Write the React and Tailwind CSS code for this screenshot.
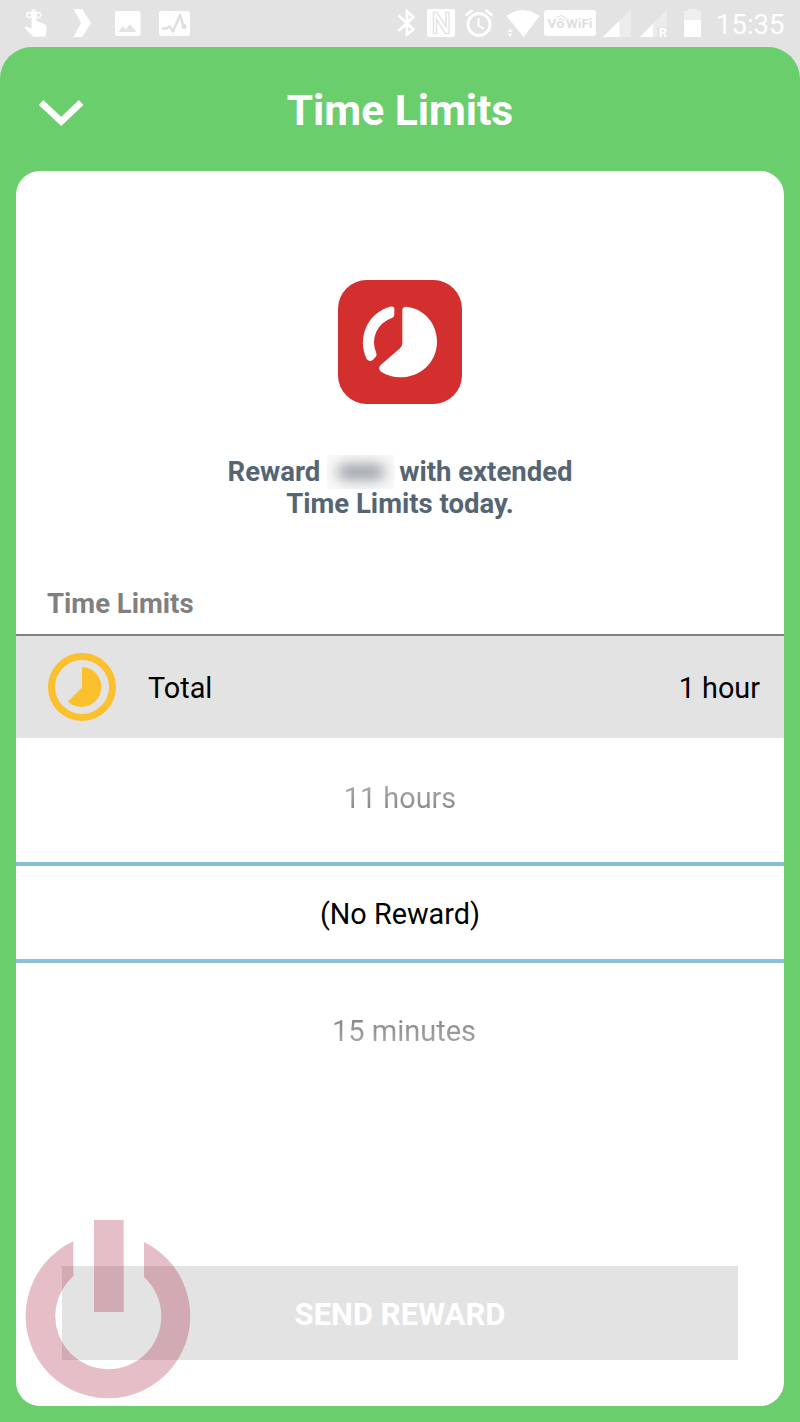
function StatusBar() {
  return (
    <div className="flex h-[47px] shrink-0 items-start pt-2 text-white">
      <svg className="ml-6 h-[30px] w-6 shrink-0" viewBox="24 8 24 30" fill="currentColor">
        <path d="M31.500 14q0-3 2.500-3t2.500 3v7l8 3.200q2.400.9 2.200 3.200l-1 9.300H33.500l-9-8.500 1.500-2 5.500 2.300z" />
        <g fill="none" stroke="currentColor" strokeWidth="1.300">
          <circle cx="29.200" cy="15" r="2.500" />
          <circle cx="38.400" cy="15" r="2.500" />
          <circle cx="33.800" cy="11.500" r="1.800" />
        </g>
      </svg>
      <svg className="ml-[25px] h-[30px] w-[18px] shrink-0" viewBox="73 8 18 30" fill="currentColor">
        <path d="M73.500 9H82L91 23 82 37H73.500L81 23z" />
      </svg>
      <svg className="ml-6 h-[30px] w-[26px] shrink-0" viewBox="115 8 26 30">
        <rect x="115" y="11" width="25.500" height="25" rx="2.500" fill="#fff" />
        <path d="M118.500 32l4.500-6 2.700 3.500 4.300-5.500 6.500 8z" fill="#e3e3e3" />
      </svg>
      <svg className="ml-[18px] h-[30px] w-[31px] shrink-0" viewBox="159 8 31 30">
        <rect x="159" y="11" width="31" height="25" rx="2.500" fill="#fff" />
        <path d="M162 28.500h4.500l3-2 3.500 5 7-16.500 3.500 11.500" fill="none" stroke="#e0e0e0" strokeWidth="2.600" strokeLinejoin="round" />
        <circle cx="184" cy="26.500" r="2.500" fill="#e0e0e0" />
      </svg>

      <svg className="ml-[207px] h-[30px] w-5 shrink-0" viewBox="397 8 20 30" fill="none" stroke="currentColor" strokeWidth="2.700">
        <path d="M398.500 15.500L413.500 29.500 407 34.500V11.500l6.500 5.500-15 14" />
      </svg>
      <svg className="ml-[10px] h-[30px] w-7 shrink-0" viewBox="427 8 28 30">
        <rect x="427" y="9" width="28" height="28" rx="2" fill="#fff" />
        <path d="M433.500 33.500V12.500h3.500l9 14V12.500h3v21h-3.500l-9-14v14z" fill="none" stroke="#e3e3e3" strokeWidth="1.400" />
      </svg>
      <svg className="ml-[9px] h-[30px] w-[30px] shrink-0" viewBox="464 8 30 30" fill="none" stroke="currentColor">
        <circle cx="479" cy="24.500" r="11" strokeWidth="3" />
        <path d="M465.500 15.500l7-5.500M492.500 15.500l-7-5.500" strokeWidth="2.800" />
        <path d="M478.500 18v7.500l5.500 3.500" strokeWidth="2" />
      </svg>
      <svg className="ml-3 h-[30px] w-[34px] shrink-0" viewBox="506 8 34 30" fill="currentColor">
        <path d="M506.500 16q16.500-12 33 0L523.500 37z" />
        <path d="M507.500 32l2.500-3.500 2.500 3.500zM507.500 33.500h5L510 37z" />
      </svg>
      <div className="mt-[2px] ml-1 flex h-[25.500px] w-[52px] shrink-0 items-center justify-center rounded-[3px] bg-white pt-[2px] font-['Roboto',sans-serif] text-[13.500px] leading-none font-bold text-[#dedede]">
        <span>V</span>
        <span className="relative">
          o
          <svg className="absolute -top-[3px] left-0 h-[8px] w-[11px]" viewBox="0 0 11 8" fill="none" stroke="#dedede" strokeWidth="1.200">
            <path d="M1 4q4-5 9 1M3 6q2-3 5 1" />
          </svg>
        </span>
        <span className="ml-[2px]">WiFi</span>
      </div>
      <svg className="ml-[7px] h-[30px] w-7 shrink-0" viewBox="603 8 28 30">
        <path d="M603 37L631 9v28z" fill="#ececec" />
        <path d="M603 37l16.500-16.500V37z" fill="#fff" />
      </svg>
      <div className="relative ml-[9px] h-[30px] w-7 shrink-0">
        <svg className="h-[30px] w-7" viewBox="640 8 28 30">
          <path d="M640 37L667 10v17h-10v10z" fill="#ececec" />
          <path d="M640 37l13-13v13z" fill="#fff" />
        </svg>
        <span className="absolute top-[17px] left-[19px] text-[12.500px] leading-[15px] font-bold">R</span>
      </div>
      <svg className="ml-[15px] h-[30px] w-[18px] shrink-0" viewBox="683 8 18 30">
        <path d="M684 11h4V9h9v2h4v9h-17z" fill="#efefef" />
        <path d="M684 20h17v17h-17z" fill="#fff" />
      </svg>
      <span className="ml-[15px] font-['Roboto',sans-serif] text-[27.500px] leading-[34px]">15:35</span>
    </div>
  );
}

function AppIcon() {
  return (
    <svg className="mt-[109px] size-[124px] shrink-0" viewBox="54 60 372 372">
      <rect x="54" y="60" width="372" height="372" rx="86" fill="#d32f2f" />
      <g fill="#fff">
        <path d="M247 151Q247 140 258 140C312 145 351 190 351 245C351 306 302 352 240 352Q208 351 183 335Q172 325 182 315L240 265Q247 259 247 250Z" />
        <path d="M210 140A112 112 0 0 0 140 297Q149 307 158 300L166 292Q172 286 168 277A76 76 0 0 1 214 175Q223 171 223 164L223 148Q223 137 210 140Z" />
      </g>
    </svg>
  );
}

function TotalIcon() {
  return (
    <svg className="size-[68px] shrink-0" viewBox="0 0 68 68">
      <circle cx="34" cy="34" r="30.500" fill="none" stroke="#fbc02d" strokeWidth="7" />
      <path d="M34 15.500Q34 14 35.500 14A20 20 0 1 1 20.500 49.200Q19.800 48.500 20.500 47.800L34 34.500Z" fill="#fbc02d" />
    </svg>
  );
}

function PowerMark() {
  return (
    <svg className="absolute top-[1219px] left-[25px] h-[181px] w-[167px]" viewBox="75 57 501 543" fill="#a91f41" fillOpacity="0.29">
      <path d="M220 124A247 247 0 1 0 432 126V231A159 159 0 1 1 220 229Z" />
      <path d="M282 60H371V336H282Z" />
    </svg>
  );
}

export default function App() {
  return (
    <div className="relative flex h-[1422px] w-[800px] flex-col overflow-hidden bg-[#e3e3e3] font-['Roboto',sans-serif]">
      <StatusBar />
      <div className="flex flex-1 flex-col rounded-t-[32px] bg-[#6ace6c] px-4 pb-4">
        <header className="grid h-[124px] shrink-0 grid-cols-[68px_1fr_68px] items-center">
          <svg className="mt-2 ml-[22px] h-7 w-[46px]" viewBox="38 99 46 28" fill="none" stroke="#fff" strokeWidth="6.600">
            <path d="M41 102.500L61.200 121.500 81.200 102.500" />
          </svg>
          <h1 className="pt-[5px] text-center text-[42.500px] leading-none font-bold text-white">Time Limits</h1>
        </header>
        <main className="flex flex-1 flex-col items-center overflow-hidden rounded-3xl bg-white">
          <AppIcon />
          <p className="mt-[52px] flex h-8 items-center text-[27.500px] font-bold whitespace-pre text-[#566573]">
            <span>Reward</span>
            <span className="mr-1 ml-[7px] flex h-[34px] w-[68px] items-center justify-center overflow-hidden bg-[#fafafa]">
              <span className="h-4 w-12 rounded-full bg-[#9a9fa5] blur-[7px]" />
            </span>
            <span>with extended</span>
          </p>
          <p className="h-8 text-[27.500px] leading-8 font-bold text-[#566573]">Time Limits today.</p>
          <h2 className="mt-[66px] h-[48px] self-stretch pl-[31px] text-[27.500px] leading-9 font-bold text-[#808080]">Time Limits</h2>
          <div className="flex h-[104px] items-center self-stretch border-t-2 border-[#808080] bg-[#e3e3e3] pr-6 pl-8 text-[28.800px] text-black">
            <TotalIcon />
            <span className="ml-8 pt-1">Total</span>
            <span className="ml-auto pt-1">1 hour</span>
          </div>
          <div className="flex h-[124px] items-center justify-center pb-[3px] text-[28.800px]">
            <span className="bg-linear-to-b from-[#b4b4b4] to-[#7c7c7c] bg-clip-text text-transparent">11 hours</span>
          </div>
          <div className="flex h-[101px] items-center justify-center self-stretch border-y-4 border-[#87c3d7] pt-1 text-[28.800px] text-black">
            (No Reward)
          </div>
          <div className="flex h-[138px] items-center justify-center pl-2 text-[29px]">
            <span className="bg-linear-to-b from-[#7c7c7c] to-[#b4b4b4] bg-clip-text text-transparent">15 minutes</span>
          </div>
          <button className="mt-auto mb-[46px] h-[94px] w-[676px] bg-[#e3e3e3] pt-1 text-[31px] font-bold text-white">SEND REWARD</button>
        </main>
      </div>
      <PowerMark />
    </div>
  );
}
